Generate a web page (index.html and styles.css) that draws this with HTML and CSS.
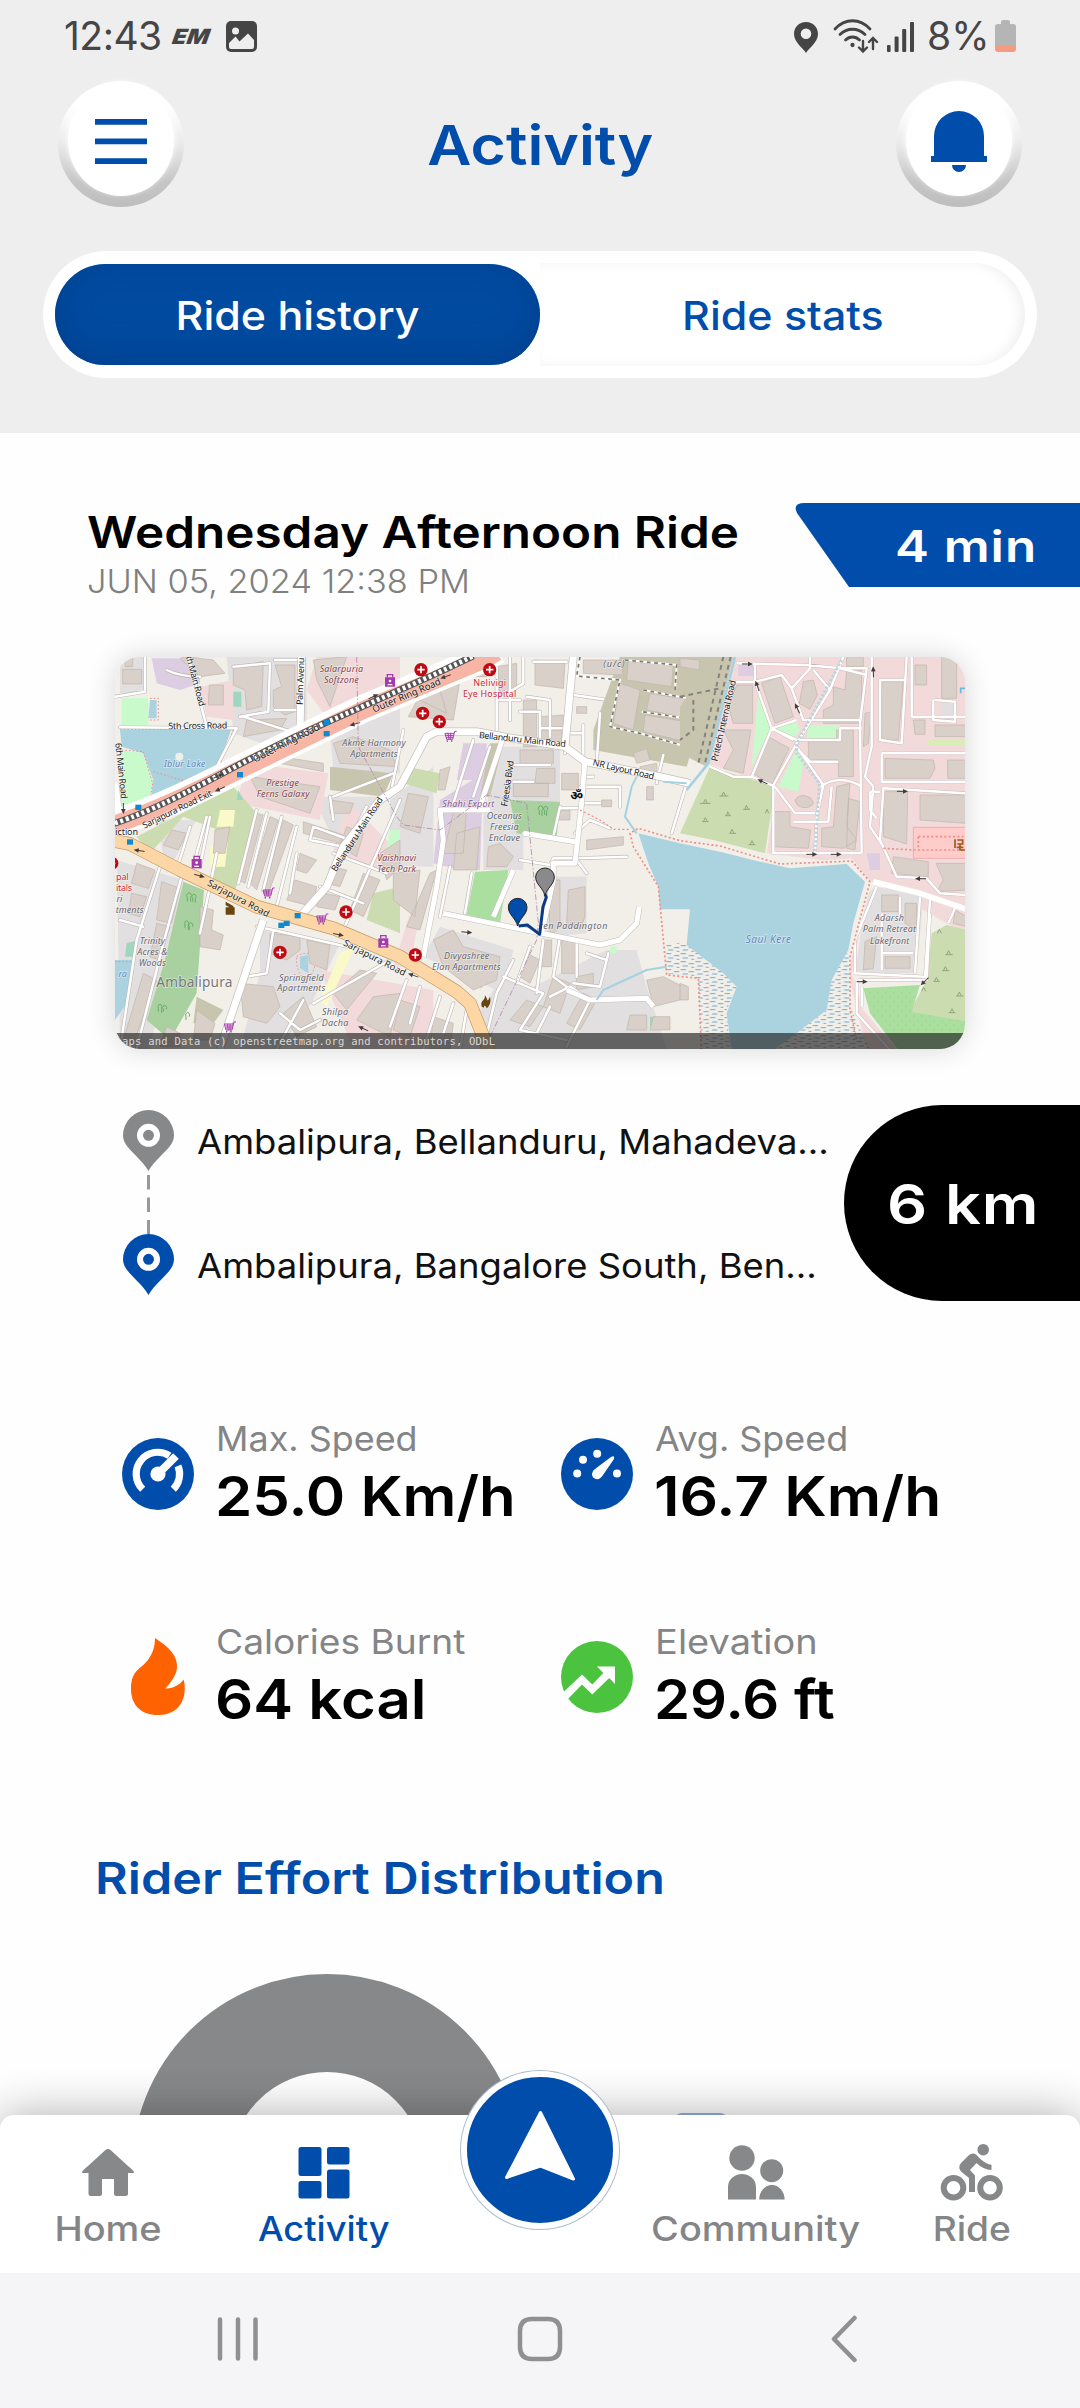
FILE: index.html
```html
<!DOCTYPE html>
<html lang="en">
<head>
<meta charset="utf-8">
<title>Activity</title>
<link rel="stylesheet" href="styles.css">
</head>
<body>
<div class="screen">
  <header class="top">
    <div class="status">
      <span class="clock">12:43</span>
      <span class="em">EM</span>
      <svg class="pic" width="31" height="31" viewBox="0 0 31 31"><rect width="31" height="31" rx="5" fill="#454545"/><path d="M3 22L9.500 15.500L13.500 20.500L22 12.500L28 19V26a2 2 0 0 1-2 2H5a2 2 0 0 1-2-2Z" fill="#eee"/><circle cx="9.500" cy="10" r="3.500" fill="#eee"/></svg>
      <span class="grow"></span>
      <svg class="loc" width="24" height="31" viewBox="0 0 24 31"><path fill="#454545" fill-rule="evenodd" d="M12 0C5 0 0 5 0 12C0 20 9 26 12 31C15 26 24 20 24 12C24 5 19 0 12 0ZM12 6.500a5.300 5.300 0 1 1 0 10.600a5.300 5.300 0 0 1 0-10.600Z"/></svg>
      <svg class="wifi" width="46" height="34" viewBox="0 0 46 34" fill="none" stroke="#454545" stroke-width="2.800" stroke-linecap="round"><path d="M2 10C12 -1 27 -1 37 10M7 15.500C14 8.500 25 8.500 32 15.500M12.500 21C16.500 17 22.500 17 26.500 21"/><circle cx="19.500" cy="26" r="1.400" fill="#454545" stroke-width="1.500"/><path stroke-width="2.400" d="M30 22V32M26 28.500L30 32.500L34 28.500M40 30V19.500M36 23L40 19L44 23"/></svg>
      <svg class="signal" width="28" height="30" viewBox="0 0 28 30" fill="#454545"><rect y="23" width="3.600" height="7" rx="1"/><rect x="7.600" y="14.500" width="4" height="15.500" rx="1"/><rect x="15.200" y="7" width="4" height="23" rx="1"/><rect x="23" width="4" height="30" rx="1"/></svg>
      <span class="percent">8%</span>
      <svg class="battery" width="21" height="32" viewBox="0 0 21 32"><path d="M6 4V2q0-2 2-2h5q2 0 2 2v2h3q3 0 3 3v19H0V7q0-3 3-3Z" fill="#b5b5b5"/><path d="M0 26H21V29q0 3-3 3H3q-3 0-3-3Z" fill="#f39c82"/></svg>
    </div>
    <div class="bar">
      <div class="round"><div class="cap"><svg width="52" height="46" viewBox="0 0 52 46" fill="#004dab"><path d="M0 0H52V5.700H0ZM0 19.500H52V25.200H0ZM0 39.300H52V45H0Z"/></svg></div></div>
      <h1>Activity</h1>
      <div class="round"><div class="cap"><svg class="bell" width="56" height="62" viewBox="0 0 56 62" fill="#004dab"><path d="M3 45V25A25 25 0 0 1 53 25V45H56V51H0V45ZM21 54H35A7 7 0 0 1 21 54Z"/></svg></div></div>
    </div>
    <div class="tabs">
      <div class="tab on"><span>Ride history</span></div>
      <div class="tab"><span>Ride stats</span></div>
    </div>
  </header>

  <main>
    <section class="head">
      <div class="names">
        <h2>Wednesday Afternoon Ride</h2>
        <p>JUN 05, 2024 12:38 PM</p>
      </div>
      <div class="badge">
        <svg width="285" height="84" viewBox="0 0 285 84"><path fill="#004dab" d="M10 0H285V84H54L2 10Q-3 0 10 0Z"/></svg>
        <span>4 min</span>
      </div>
    </section>

    <div class="map">
      <svg width="850" height="392" viewBox="0 0 850 392">
        <defs>
          <pattern id="marsh" width="44" height="24" patternUnits="userSpaceOnUse"><path d="M2 5H18M26 11H42M8 18H24M34 22H42" stroke="#3d93cf" stroke-width="2.200"/></pattern>
          <pattern id="dots" width="24" height="28" patternUnits="userSpaceOnUse"><circle cx="6" cy="8" r="1.600" fill="#84c482"/><circle cx="18" cy="22" r="1.600" fill="#84c482"/></pattern>
          <g id="hosp"><circle r="20" fill="#bf0a14"/><path d="M-11 0H11M0-11V11" stroke="#fff" stroke-width="5"/></g>
          <g id="shop"><path d="M-15-10H15V18H-15Z" fill="#a53aad"/><path d="M-8-10V-18H8V-10" fill="none" stroke="#a53aad" stroke-width="4"/><circle cy="1" r="4" fill="#fff"/><path d="M-7 12H7" stroke="#fff" stroke-width="4"/></g>
          <g id="cart" fill="none" stroke="#a53aad" stroke-width="3"><path d="M18-16H12L6 8H-12L-17-10H10M-14-4H9M-13 2H8M-8-10L-5 8M0-10V8"/><path d="M-12 13H9" stroke-dasharray="4 9" stroke-width="5"/></g>
          <g id="stop"><rect x="-9" y="-8" width="18" height="16" fill="#0d8ad0"/></g>
          <g id="arr"><path d="M-16 0H6" stroke="#443c38" stroke-width="3"/><path d="M2-7L17 0L2 7Z" fill="#443c38"/></g>
          <g id="pin"><path d="M0 0C-6-24-28-34-28-56A28 27 0 0 1 28-56C28-34 6-24 0 0Z" stroke="#222" stroke-width="3"/></g>
          <path id="lanes" fill="none" stroke-linejoin="round" stroke-linecap="round" d="M45 170L135 155V50M265 50L320 260M200 90Q240 110 300 110M400 80L510 70L505 215L420 230M430 230L590 280M525 60H600V210H525M610 50L590 290M60 262L410 265L350 380M470 510L415 730M500 520L445 740M545 530L490 750M590 560L530 800M320 530L285 660M330 530L300 680M640 560L750 600L800 500M640 560L630 600L730 620M590 640L570 760M660 740L790 790M700 640L860 700M900 480L730 870M180 680L110 900L60 1227M250 690L190 910L110 1227M270 560L230 690M350 640L330 740L300 880M60 840L130 860M470 860L520 870L500 1000L440 1010M520 870L740 920M610 1080L530 1227M640 1090L870 960M540 1120L600 1170L660 1140M700 470L880 400M690 470L700 540M1190 50V270M1230 50V240M1190 180H1260M1270 50V130L1190 180M1300 65H1400M1420 165L1510 178M1280 170L1350 180V290M1260 215H1320V310M1320 265H1390M1240 375H1350M1240 425H1300M1450 255V370M1395 340V280H1450M1500 220L1490 370M1460 410H1480M1440 440H1560V500M1450 490H1500M1380 505H1440M1425 580L1470 540L1530 565M1270 580L1425 605M1380 500L1360 590M1260 660L1350 675L1360 655H1430L1580 650M1430 660L1460 700M1690 345L1670 430M1760 430L1715 580M1120 300L1060 490M1170 320L1120 470M870 470L910 270M1050 680L1020 830M1115 700L1095 820M920 1020L870 1160M960 1040L930 1150M1020 1070L970 1227M1060 1090L1030 1180M1100 1110L1080 1227M1240 960L1190 1060L1150 1227M1290 920L1250 1030M1330 900L1310 1060M1380 890L1360 1010L1400 1040M1430 900V1010M1525 940L1500 1040L1420 1030M1460 940L1520 960M1210 1010L1330 1060L1260 1170L1400 1200M1350 1070L1410 1040L1470 1080L1400 1220M1350 1100L1310 1180"/>
          <path id="ways" fill="none" stroke-linejoin="round" d="M170 70L380 75L480 85H560L540 250L545 640M390 50V85L335 145L370 240H545M335 145L305 105L225 125H165M225 70V125L275 265L215 410M275 265L350 300L480 300V265H545M275 265L350 240M490 50L450 150L350 310L280 435V640H545M350 320L430 435L410 530L405 645M285 440L345 520H405M420 440Q480 400 545 440M455 440L445 545H340M275 265L340 300M90 380L160 410H215L285 440M400 90L450 150M480 85L560 105M575 50V320L555 410L580 440L570 560L610 620M680 50L665 310L600 300L600 120H680M695 50V230H860M765 180L825 185V245L760 240V180M605 340H860M605 340V425H860M860 460L610 445L600 600L650 710L740 715L780 760L860 765M355 330L390 365H475M750 780L735 1010L520 1000M590 740L525 900V1000M605 820V990M660 770V830H610M720 770L705 1000M605 940H700M535 1020H740L750 820M530 1020V1120L630 1230M545 1040V1100M825 805L805 850M570 455H600M570 455V510L590 535"/>
        </defs>
        <rect width="850" height="392" fill="#f2efe9"/>
        <g transform="translate(-15 -17) scale(.33333)">
          <!-- land use -->
          <g>
            <path fill="#e2dfe0" d="M380 50H620V280L540 330L400 280ZM60 50H140V160H60ZM690 280L900 200V400L700 390ZM640 470H840L700 600ZM480 870L720 910L640 1080L540 1227H420L480 1000ZM170 540H290L200 700ZM50 660L250 720L150 1227H60ZM1000 380V680H870V480ZM1190 320H1380V500H1160ZM1150 500H1270V690H1150ZM1020 860L1240 930L1210 1060L970 950ZM1340 710H1460V880L1340 890ZM1520 930H1610L1640 1040L1700 1227H1160L1300 1040ZM1210 1000L1330 1060L1200 1227L1130 1130Z"/>
            <path fill="#ddcde3" d="M155 55H300V130L240 150L170 130ZM1090 310H1160V420H1070ZM1020 480L1150 400L1140 690H1080L1000 670Z"/>
            <path fill="#f3dada" d="M300 140L400 120V240L320 230ZM440 370L685 400L660 540L410 490ZM650 50H900V190L700 260L620 150ZM740 480L900 640L860 700L700 640ZM660 990L1000 1050V1227H760ZM930 820L960 820L930 980H880Z"/>
            <path fill="#c8c5ae" d="M690 380L880 400L850 470L690 450ZM1170 310H1210L1170 470H1140ZM1480 270L1560 50H1860L1760 380L1480 330ZM290 1070L370 1110L340 1150H280Z"/>
            <path fill="#cbdcb0" d="M110 590L400 440L470 520L400 770L330 740L380 580L250 530L150 640ZM920 380L1020 400L1010 460L910 430ZM820 760L900 740V880L800 840Z"/>
            <path fill="#fafac8" d="M360 510H405L400 560H350ZM330 620L385 590L375 680H330ZM720 940L765 920L680 1100L660 1080Z"/>
            <path fill="#c8facc" d="M65 175H145V255H65ZM62 330L130 340L160 430L140 500L70 520ZM870 570H900V630H860ZM1530 920H1550V940H1530Z"/>
            <path fill="#a9d1a0" d="M250 725L312 750L290 1060L210 1200L140 1140L195 960ZM1230 480L1380 485L1370 590L1250 580Z"/>
            <path fill="#aadfa0" d="M1125 695L1225 690L1200 850L1100 825Z"/>
            <path fill="#9fd6be" d="M400 155H424V200H400ZM415 450L430 480H410ZM80 910L115 900L100 950H75ZM1650 1130H1670V1160H1650Z"/>
          </g>
          <!-- lakes -->
          <path fill="#aad3df" d="M60 270L395 265L350 390L180 480L150 500L160 420L130 340L65 320ZM150 180H170V235H145ZM45 960H100L80 1090L45 1140ZM600 950L625 945V1000L600 985ZM320 880H335V905H315Z"/>
          <circle cx="238" cy="350" r="12" fill="#f2efe9"/>
          <path fill="none" stroke="#ee8d86" stroke-width="3" stroke-dasharray="5 6" d="M60 268H400L355 390M150 175H175V240H145M65 330L130 335L158 430L145 510M160 395L260 425M590 950Q620 930 645 950Q650 1000 615 1020Q585 990 590 950M45 965H100M1065 910L1120 940L1160 1010L1140 1050"/>
          <!-- buildings -->
          <g fill="#d9d0c9" stroke="#c0b3a9" stroke-width="2">
            <path d="M68 88H125V132H68ZM75 55H98V80H75ZM240 55L260 50L340 60L375 100L300 110ZM328 135H370V195H325ZM400 80L490 65L485 200L440 210L435 150L400 135ZM525 75H585V215L555 225L520 200V150L545 140ZM440 240L560 235L540 270L430 290ZM640 60L740 50L690 200L650 120ZM700 310L760 290L870 330L890 380L720 370ZM450 410L660 440L630 520L480 470ZM540 350L670 370V395L540 370ZM690 480L760 490L750 520H690ZM215 570L260 580L235 630L190 615ZM345 570L390 560L375 640H340ZM470 520L490 525L435 730L415 720ZM510 530L535 540L470 750L450 730ZM550 540L580 555L505 760H490ZM610 545L730 585L720 610L610 580ZM600 640L650 660L620 700L590 690ZM585 720L650 740L640 800L560 780ZM655 755L720 770L705 810L650 800ZM690 680L740 690L720 740L680 730ZM110 670L165 690L145 745L95 730ZM185 725L240 745L215 850L170 840ZM170 850L210 860L180 960L150 950ZM95 760L140 770L120 830L85 820ZM300 800L340 810L335 870L370 885L360 930L300 920ZM510 880L600 890V930L560 960L510 940ZM620 900L690 915L680 990L630 970ZM420 1030L520 1040L540 1100L500 1150L430 1130ZM550 1120L610 1070L650 1160L590 1190ZM700 1060L780 990L830 1000L740 1110ZM820 1070L900 1060L870 1190L770 1140ZM130 1000L170 1020L100 1210L70 1200ZM200 1160L240 1180V1220H180ZM290 1110L345 1150L330 1200H280ZM740 560L790 580L770 650L720 620ZM840 640L900 600V680L860 720ZM790 700L840 720L790 830L750 810Z"/>
            <path d="M925 230L990 110L1080 120L1060 240ZM960 180L1020 150L1040 220ZM1100 60H1160V110H1100ZM1190 80L1250 70V150L1200 160ZM1270 180H1310V320H1270ZM1320 230L1390 225V260L1320 265ZM1325 270H1385V305H1320ZM1305 60L1395 70L1390 145L1305 135ZM1260 330H1360V370H1260ZM1310 385H1365V430H1305ZM1240 430H1345V470H1240ZM1385 400H1435V450H1385ZM925 460L985 470L960 580L900 560ZM1020 390L1050 380L1035 450H1015ZM1060 520L1100 500L1090 640H1030ZM1070 580L1140 560L1130 690H1060ZM1165 620L1200 610L1240 650L1220 680H1160ZM880 700L960 690L945 830L880 780ZM990 700L1010 690L960 870L920 860ZM1000 900L1060 870L1090 920L1200 950L1190 1020L1120 1050L1030 980ZM1345 720H1380V860L1350 890ZM1405 750L1455 740V830L1440 870L1400 850ZM1460 600L1570 590V615L1460 630ZM1280 940L1320 960L1290 1030L1260 1010ZM1330 900H1355V980H1325ZM1385 900H1430V1000H1385ZM1430 1010L1480 1000V1040L1430 1050ZM1360 1010L1410 1030L1380 1120L1330 1100ZM1450 1060L1490 1080L1440 1170L1400 1150ZM1280 1080L1330 1100L1290 1160L1230 1140ZM1640 1020L1690 1010L1750 1040L1740 1080L1660 1100ZM1590 1125H1640V1170H1580ZM1660 1130H1710V1170H1650ZM1430 200H1460V220H1430ZM1600 340L1640 325L1650 360L1610 370ZM1620 380L1670 370V400H1620ZM1640 440H1660V480H1640ZM1505 480H1535V500H1505ZM1375 510H1410V540H1375ZM900 1080L960 1100L930 1190L880 1170ZM1000 1130L1060 1150L1050 1227H990Z"/>
            <path d="M1450 60H1560L1570 105L1450 100ZM1585 65L1720 75L1715 140L1580 120ZM1560 130L1620 150L1600 270L1540 250ZM1650 160L1770 180L1765 235L1640 210ZM1635 225L1760 245L1755 305L1630 275Z"/>
          </g>
          <path fill="none" stroke="#fff" stroke-width="6" d="M1440 50L1430 108L1560 120L1530 260L1620 280L1760 320M1575 60L1730 75L1725 150M1630 150L1790 180V240L1625 215"/>
          <path fill="none" stroke="#7d7774" stroke-width="5" stroke-dasharray="11 11" d="M1440 50L1430 108L1560 120L1530 260L1620 280L1760 320M1575 60L1730 75L1725 150M1630 150L1790 180V240L1625 215"/>
          <!-- minor streets -->
          <use href="#lanes" stroke="#bdb7b5" stroke-width="11"/>
          <use href="#lanes" stroke="#fff" stroke-width="7.500"/>
          <!-- collector roads -->
          <g fill="none" stroke-linejoin="round">
            <path stroke="#c3bdba" stroke-width="25" d="M600 830L680 740L730 620L840 480L900 440L980 290L1010 275H1130L1210 290L1395 320L1455 365L1680 410L1770 430M1395 320L1420 50M490 840L360 1227M600 280L605 50M45 430L60 560"/>
            <path stroke="#c3bdba" stroke-width="18" d="M1030 820L1250 865L1500 915L1560 900L1610 850L1618 800M1455 360L1445 490L1425 670H1360V720L1325 880M1170 510H1020L1030 600L1010 740L970 950M1210 290L1140 500M1270 580L1425 605M1240 690L1180 830M1400 1050L1470 1080L1640 1075L1660 1100"/>
            <path stroke="#fff" stroke-width="21" d="M600 830L680 740L730 620L840 480L900 440L980 290L1010 275H1130L1210 290L1395 320L1455 365L1680 410L1770 430M1395 320L1420 50M490 840L360 1227M600 280L605 50M45 430L60 560"/>
            <path stroke="#fff" stroke-width="15" d="M1030 820L1250 865L1500 915L1560 900L1610 850L1618 800M1455 360L1445 490L1425 670H1360V720L1325 880M1170 510H1020L1030 600L1010 740L970 950M1210 290L1140 500M1270 580L1425 605M1240 690L1180 830M1400 1050L1470 1080L1640 1075L1660 1100"/>
            <!-- trunk road with railway -->
            <path stroke="#fff" stroke-width="84" d="M30 552Q140 526 350 421T790 206L1150 56L1190 31"/>
            <path stroke="#f7b5a5" stroke-width="54" d="M30 557Q140 526 350 423T790 210L1150 60L1190 36"/>
            <path stroke="#555" stroke-width="20" d="M30 554Q140 522 345 412T780 203L1000 105L1120 48"/>
            <path stroke="#fff" stroke-width="14" stroke-dasharray="9 8" d="M30 554Q140 522 345 412T780 203L1000 105L1120 48"/>
            <!-- Sarjapura Road -->
            <path stroke="#c49a68" stroke-width="41" d="M30 600L90 612L240 690L470 800L700 865L900 950L1070 1055L1110 1090L1170 1240"/>
            <path stroke="#fcd6a4" stroke-width="37" d="M30 600L90 612L240 690L470 800L700 865L900 950L1070 1055L1110 1090L1170 1240"/>
            <path stroke="#ac84aa" stroke-width="3" stroke-dasharray="18 6 4 6" opacity=".8" d="M770 50L775 320L890 530L910 555L1020 570L1160 465L1280 490L1315 850L1310 900L1170 1190"/>
            <path stroke="#a5d2e3" stroke-width="6" d="M1610 410L1595 440L1575 530L1610 580M1700 980L1640 990L1510 1050L1490 1080M1690 425L1760 430"/>
            <path stroke="#ee8d86" stroke-width="3.500" stroke-dasharray="6 7" d="M1440 510L1500 540L1540 568H1590"/>
          </g>
        </g>
        <g transform="translate(565 -17) scale(.33333)">
          <!-- business district -->
          <path fill="#f3dada" d="M165 50H860V880L800 850L570 720L515 1000L550 1110L650 1230H560L510 1020L500 670L260 640L290 440L80 370Z"/>
          <path fill="#c8c5ae" d="M100 50H160L80 380L0 340V200Z"/>
          <path fill="#cbdcb0" d="M90 380L285 440L255 640L100 600L0 580Z"/>
          <path fill="#c8facc" d="M235 160L275 260L215 380ZM275 265L345 240L360 270L335 300ZM385 255H480L470 300H380ZM350 330L370 370L355 455L295 440Z"/>
          <path fill="#ddcde3" d="M175 75H225V108H175ZM560 640H600V690H570Z"/>
          <path fill="#e2dfe0" d="M560 760L590 740L730 770L710 1000L525 1000ZM785 190H825V240H785Z"/>
          <path fill="#cbdcb0" d="M755 880L800 855L860 870V1150L690 1115L740 1020Z"/>
          <path fill="#aadfa0" d="M550 1045L720 1035L695 1115L860 1145V1230H655L570 1120Z"/>
          <path fill="url(#dots)" d="M550 1045L720 1035L695 1115L860 1145V1230H655L570 1120Z"/>
          <path fill="#fcc" stroke="#e99" stroke-width="2" d="M700 562H860V655H700Z"/>
          <path fill="#d8edb8" d="M745 300H860V318H745Z"/>
          <g fill="#d9d0c9" stroke="#c0b3a9" stroke-width="2">
            <path d="M170 135H218V250H160L145 200ZM130 270H213L190 400L130 385L160 330ZM245 130L300 110L340 230L285 250ZM265 290L328 325L275 435L220 400ZM370 125L400 120L412 165L390 208L358 190ZM460 140L495 150L500 90H545V250H430V210L460 195ZM500 50H550V80H500ZM385 305H470V270H520V410H475V360H385ZM605 125H670L655 300H605ZM555 220L575 215L565 310L550 320ZM705 75H740V135H705ZM700 240H735V283H705ZM785 50H830V175H785ZM765 255H860V290H765ZM615 355L760 360L765 385L750 415H615ZM803 360H860V415H803ZM610 455H683L680 612L610 590ZM720 465H860V550L720 540ZM280 515H330V560L392 570L385 625L280 620ZM470 440L510 430L500 560L530 600L490 625L425 620V565L460 560ZM505 475L540 485L525 630L500 625ZM640 650L745 665V710L635 700ZM768 670H860V750L770 755L790 720ZM605 765H655V815H605ZM675 790H710V870L675 850ZM555 905L590 890L580 985L550 990ZM615 950H690V985H615ZM825 810L860 830V860L820 850ZM0 1030L25 1040V1080H0ZM0 55L58 60V90L0 80ZM345 480A30 28 0 0 0 400 490A30 28 0 0 0 345 480"/>
          </g>
          <use href="#ways" stroke="#c9b6b5" stroke-width="10"/>
          <use href="#ways" stroke="#fff" stroke-width="7.500"/>
          <g fill="none" stroke-linejoin="round">
            <path stroke="#fff" stroke-width="17" d="M580 725L720 760L860 808"/>
            <path stroke="#85817c" stroke-width="6" stroke-dasharray="14 12" d="M130 50L55 370M152 50L75 370M0 170L120 145M40 180V270L0 300"/>
            <path stroke="#a5d2e3" stroke-width="8" d="M165 50L85 370L20 450"/>
            <path stroke="#b7d6df" stroke-width="9" stroke-dasharray="7 6" d="M485 60L350 310V340L418 430L405 640"/>
          </g>
          <!-- Saul Kere -->
          <path fill="#f2efe9" d="M-60 808H32L20 915L60 1230H150L460 1230L515 950L575 730L515 655L330 670L120 625L0 600L-130 565Z"/>
          <path fill="url(#marsh)" d="M-40 910H20L140 1000L170 1040L140 1110L150 1230H65L55 1015L-45 1000ZM505 930L455 1020L440 1110L350 1180L250 1230H570L515 1110Z"/>
          <path fill="#aad3df" d="M-125 580L0 610L120 635L240 665L330 685L500 672L555 725L520 850L505 930L455 1020L440 1110L350 1180L280 1230H155L140 1120L170 1040L130 1000L20 915L30 808H-60L-65 740L-95 670Z"/>
          <path fill="none" stroke="#ee8d86" stroke-width="5" stroke-dasharray="6 7" d="M64 1230L55 1015L-40 1005L-65 740L-140 620L-150 580L-125 565L0 602L120 618L300 672L515 663L570 725L510 950V1110L530 1200M610 625L700 630H860M715 590H850M715 590V625"/>
          <g fill="none" stroke="#8fa77a" stroke-width="3"><path d="M70 490L76 478L82 490M60 490H92M125 468L131 456L137 468M118 468H145M195 508L199 496L205 508M190 508H210M140 527L143 515L150 527M135 527H152M70 545L76 533L82 545M66 545H86M150 580L156 568L162 580M148 580H168M210 614L216 602L222 614M206 614H226M256 520L261 508L266 520M800 944L806 932L812 944M796 944H818M790 992L796 980L802 992M786 992H808M764 1024L769 1012L775 1024M760 1024H780M832 1068L838 1056L844 1068M828 1068H850M725 1054L731 1042L737 1054M810 1118L816 1106L822 1118M806 1118H826M772 880L778 868L784 880"/></g>
          <path fill="none" stroke="#9c5b16" stroke-width="5" d="M825 598V624M832 600H848V612H832M840 612V630H856M830 622H850"/>
          <path fill="none" stroke="#6bb8e0" stroke-width="5" d="M860 145H842V160"/>
        </g>
        <!-- direction arrows and places -->
        <g transform="translate(-15 -17) scale(.33333)">
          <use href="#arr" transform="translate(298 707) rotate(15)"/><use href="#arr" transform="translate(715 884) rotate(12)"/><use href="#arr" transform="translate(118 632) rotate(190)"/><use href="#arr" transform="translate(360 447) rotate(155)"/><use href="#arr" transform="translate(70 505) rotate(90)"/><use href="#arr" transform="translate(765 252) rotate(165)"/><use href="#arr" transform="translate(355 408) rotate(-25)"/><use href="#arr" transform="translate(820 170) rotate(-25)"/><use href="#arr" transform="translate(940 1006) rotate(200)"/><use href="#arr" transform="translate(790 1166) rotate(205)"/><use href="#arr" transform="translate(1100 877) rotate(5)"/><use href="#arr" transform="translate(1037 110) rotate(160)"/>
          <use href="#arr" transform="translate(1942 72)"/><use href="#arr" transform="translate(1972 138) rotate(-110)"/><use href="#arr" transform="translate(2092 205) rotate(-115)"/><use href="#arr" transform="translate(2320 96) rotate(-92)"/><use href="#arr" transform="translate(1988 425) rotate(205)"/><use href="#arr" transform="translate(2407 454)"/><use href="#arr" transform="translate(2135 643)"/><use href="#arr" transform="translate(2208 643)"/><use href="#arr" transform="translate(2462 716) rotate(180)"/><use href="#arr" transform="translate(2286 1025)"/><use href="#arr" transform="translate(2474 1024) rotate(135)"/>
          <use href="#stop" x="680" y="247"/><use href="#stop" x="680" y="281"/><use href="#stop" x="420" y="404"/><use href="#stop" x="115" y="502"/><use href="#stop" x="90" y="606"/><use href="#stop" x="593" y="827"/><use href="#stop" x="560" y="850"/><use href="#stop" x="544" y="856"/>
          <use href="#hosp" x="738" y="816"/><use href="#hosp" x="540" y="937"/><use href="#hosp" x="35" y="670"/><use href="#hosp" x="963" y="89"/><use href="#hosp" x="1169" y="89"/><use href="#hosp" x="968" y="220"/><use href="#hosp" x="1018" y="245"/><use href="#hosp" x="946" y="945"/>
          <use href="#shop" x="870" y="122"/><use href="#shop" x="290" y="667"/><use href="#shop" x="850" y="905"/>
          <use href="#cart" x="506" y="760"/><use href="#cart" x="667" y="838"/><use href="#cart" x="390" y="1162"/><use href="#cart" x="1052" y="290"/>
          <path fill="#69450f" d="M377 785L400 798V808L377 796ZM377 802H404V824H377ZM1145 1100C1140 1080 1155 1085 1155 1066C1165 1080 1160 1090 1170 1070C1175 1090 1165 1100 1160 1105C1158 1095 1150 1095 1152 1103Z"/>
          <path fill="none" stroke="#67ad69" stroke-width="3" d="M262 785V772A7 8 0 1 1 272 772V785M278 785V775A6 7 0 1 1 286 775V788M255 865V855A6 8 0 1 1 265 855V870M268 870V860A6 7 0 1 1 277 860M175 1115V1105A6 8 0 1 1 185 1105V1118M190 1115V1108A6 7 0 1 1 198 1108M258 1140V1130A6 8 0 1 1 268 1130M1318 525V512A7 8 0 1 1 1326 512V528M1334 525V512A6 7 0 1 1 1340 512V528"/>
          <g class="lbl">
            <g class="street">
              <text x="205" y="268" textLength="177" transform="rotate(-1 205 268)">5th Cross Road</text>
              <text textLength="156" transform="translate(258 50) rotate(75)">th Main Road</text>
              <text textLength="168" transform="translate(46 310) rotate(84)">6th Main Road</text>
              <text textLength="142" transform="translate(608 195) rotate(-88)">Palm Avenu</text>
              <text textLength="220" font-size="29" transform="translate(465 368) rotate(-27)">Outer Ring Road</text>
              <text textLength="220" font-size="29" transform="translate(822 218) rotate(-23)">Outer Ring Road</text>
              <text textLength="228" transform="translate(133 566) rotate(-26)">Sarjapura Road Exit</text>
              <text textLength="206" font-size="28" transform="translate(320 735) rotate(28)">Sarjapura Road</text>
              <text textLength="206" font-size="28" transform="translate(728 915) rotate(27)">Sarjapura Road</text>
              <text textLength="260" transform="translate(708 697) rotate(-57)">Bellanduru Main Road</text>
              <text textLength="262" transform="translate(1136 294) rotate(6)">Bellanduru Main Road</text>
              <text textLength="188" transform="translate(1477 376) rotate(13)">NR Layout Road</text>
              <text textLength="138" transform="translate(1222 500) rotate(-82)">Freesia Blvd</text>
              <text textLength="248" transform="translate(1852 365) rotate(-77)">Pritech Internal Road</text>
              <text x="46" y="586" textLength="68">iction</text>
            </g>
            <g class="shopping">
              <text x="724" y="95" textLength="130">Salarpuria</text><text x="724" y="129" textLength="104">Softzone</text>
              <text x="548" y="438" textLength="98">Prestige</text><text x="549" y="471" textLength="158">Ferns Galaxy</text>
              <text x="890" y="663" textLength="116">Vaishnavi</text><text x="890" y="695" textLength="116">Tech Park</text>
            </g>
            <g class="housing">
              <text x="822" y="318" textLength="190">Akme Harmony</text><text x="822" y="350" textLength="142">Apartments</text>
              <text x="58" y="786">ri</text><text x="89" y="820" textLength="84">tments</text>
              <text x="157" y="912" textLength="76">Trinity</text><text x="157" y="944" textLength="90">Acres &amp;</text><text x="157" y="978" textLength="82">Woods</text>
              <text x="604" y="1022" textLength="134">Springfield</text><text x="604" y="1054" textLength="144">Apartments</text>
              <text x="705" y="1126" textLength="78">Shilpa</text><text x="705" y="1158" textLength="80">Dacha</text>
              <text x="1213" y="536" textLength="106">Oceanus</text><text x="1213" y="570" textLength="86">Freesia</text><text x="1213" y="602" textLength="94">Enclave</text>
              <text x="1100" y="956" textLength="136">Divyashree</text><text x="1099" y="990" textLength="206">Elan Apartments</text>
              <text x="1420" y="867" textLength="204">ren Paddington</text>
              <text x="1542" y="82" textLength="64">(u/c)</text>
              <text x="2368" y="844" textLength="88">Adarsh</text><text x="2368" y="877" textLength="160">Palm Retreat</text><text x="2369" y="911" textLength="118">Lakefront</text>
            </g>
            <text class="works" x="1105" y="500" textLength="156">Shahi Export</text>
            <text class="water" x="254" y="381" textLength="124">Iblur Lake</text>
            <text class="water" x="2005" y="909" textLength="136" font-size="30">Saul Kere</text>
            <text class="water" x="68" y="1010">ra</text>
            <g class="clinic"><text x="67" y="720" textLength="38">pal</text><text x="72" y="754" textLength="48">itals</text><text x="1169" y="138" textLength="98">Nelivigi</text><text x="1169" y="170" textLength="160">Eye Hospital</text></g>
            <text class="town" x="283" y="1041" textLength="228">Ambalipura</text>
            <text x="1430" y="479" text-anchor="middle" font-size="38" font-weight="700" fill="#111">ॐ</text>
          </g>
          <!-- recorded ride -->
          <path fill="none" stroke="#0b3b84" stroke-width="9" stroke-linejoin="round" d="M1335 762L1339 772L1329 800L1319 883L1282 855L1256 858"/>
          <use href="#pin" x="1335" y="767" fill="#8a8a8c"/>
          <use href="#pin" x="1253" y="858" fill="#004dab"/>
        </g>
        <rect y="376" width="850" height="16" fill="#222" fill-opacity=".66"/>
        <text class="credit" x="7" y="388" textLength="373">aps and Data (c) openstreetmap.org and contributors, ODbL</text>
      </svg>
    </div>

    <section class="route">
      <div class="stops">
        <div class="stopline"><svg width="51" height="61" viewBox="0 0 51 61"><path fill="#878889" d="M25.500 0A25.500 25.500 0 0 0 0 25.500C0 38 17 46 25.500 61C34 46 51 38 51 25.500A25.500 25.500 0 0 0 25.500 0Z"/><circle cx="25.500" cy="25.300" r="8.500" fill="none" stroke="#fff" stroke-width="6"/></svg><span>Ambalipura, Bellanduru, Mahadeva...</span></div>
        <svg class="dash" width="3" height="63" viewBox="0 0 3 63"><path d="M1.500 4V63" stroke="#999" stroke-width="3" stroke-dasharray="14.500 8"/></svg>
        <div class="stopline"><svg width="51" height="61" viewBox="0 0 51 61"><path fill="#004dab" d="M25.500 0A25.500 25.500 0 0 0 0 25.500C0 38 17 46 25.500 61C34 46 51 38 51 25.500A25.500 25.500 0 0 0 25.500 0Z"/><circle cx="25.500" cy="25.300" r="8.500" fill="none" stroke="#fff" stroke-width="6"/></svg><span>Ambalipura, Bangalore South, Ben...</span></div>
      </div>
      <div class="distance"><span>6 km</span></div>
    </section>

    <section class="stats">
      <div class="stat">
        <svg width="72" height="72" viewBox="0 0 72 72"><circle cx="36" cy="36" r="36" fill="#004dab"/><g fill="none" stroke="#fff" stroke-width="7.200"><path d="M20.700 51.300A21.600 21.600 0 0 1 47.500 17.700M56 27.800A21.600 21.600 0 0 1 51.300 51.300"/><path d="M36 36L54 18" stroke-width="8"/></g><circle cx="36" cy="36" r="7.600" fill="#fff"/></svg>
        <div><p class="k">Max. Speed</p><p class="v">25.0 Km/h</p></div>
      </div>
      <div class="stat">
        <svg width="72" height="72" viewBox="0 0 72 72"><circle cx="36" cy="36" r="36" fill="#004dab"/><g fill="#fff"><circle cx="16.200" cy="35.500" r="4"/><circle cx="22" cy="21.700" r="4"/><circle cx="36.200" cy="15.700" r="4"/><circle cx="56" cy="35.500" r="4"/><path d="M31 36Q31 33 34 31L50 19Q54 17 53 21L42 37Q39 42 35 41Q31 40 31 36Z"/></g></svg>
        <div><p class="k">Avg. Speed</p><p class="v avg">16.7 Km/h</p></div>
      </div>
      <div class="stat">
        <svg class="flame" width="72" height="78" viewBox="-9 0 72 78"><path fill="#ff6200" d="M24 0C38 9 47 18 46 30C45 38 40 44 34.500 50.500C42 51 50 46 52.500 41.500C56 52 54 77 27 77C10 77 0 67 0 51C0 32 10 31 17 22C22 15 24 8 24 0Z"/></svg>
        <div><p class="k cal">Calories Burnt</p><p class="v">64 kcal</p></div>
      </div>
      <div class="stat">
        <svg width="72" height="72" viewBox="0 0 72 72"><circle cx="36" cy="36" r="36" fill="#4bc33e"/><path fill="#fff" d="M0 53.500L21 33.500L31.300 43.500L42.400 32L36 25.500H54V43L48.200 37L31.300 53.500L21 43.500L4 61Z"/></svg>
        <div><p class="k elev">Elevation</p><p class="v feet">29.6 ft</p></div>
      </div>
    </section>

    <h3>Rider Effort Distribution</h3>
    <section class="chart">
      <svg width="390" height="390" viewBox="0 0 390 390"><circle cx="195" cy="195" r="146" fill="none" stroke="#878889" stroke-width="98"/></svg>
      <div class="swatch"></div>
    </section>
  </main>

  <nav class="nav">
    <div class="item"><svg width="64" height="64" viewBox="0 0 64 64"><path fill="#878889" d="M29.500 10Q32 8 34.500 10L57 30.500Q59 33 57 33H52V53.500Q52 56 49.500 56H40.500Q38 56 38 53.500V39H26V53.500Q26 56 23.500 56H15Q12.500 56 12.500 53.500V33H7Q5 33 7 30.500Z"/></svg><span class="wide">Home</span></div>
    <div class="item active"><svg width="64" height="64" viewBox="0 0 64 64" fill="#004dab"><rect x="6.500" y="7" width="23" height="29" rx="2.500"/><rect x="35" y="7" width="22.500" height="17.500" rx="2.500"/><rect x="6.500" y="41" width="23" height="17.500" rx="2.500"/><rect x="35" y="29.500" width="22.500" height="29" rx="2.500"/></svg><span class="act">Activity</span></div>
    <div class="item mid"><div class="fab"><svg width="72" height="72" viewBox="0 0 72 72"><path fill="#fff" stroke="#fff" stroke-width="3" stroke-linejoin="round" d="M36.500 3.500L69.500 70L36.500 57L2.500 68.500Z"/></svg></div></div>
    <div class="item"><svg width="64" height="64" viewBox="0 0 64 64" fill="#878889"><circle cx="18" cy="18" r="12.700"/><path d="M4 59.500V47A14 13 0 0 1 32 47V59.500ZM35.200 59.500A12.700 14.500 0 0 1 60.600 59.500Z"/><circle cx="47.700" cy="30.700" r="11.500"/></svg><span class="wide">Community</span></div>
    <div class="item"><svg width="64" height="64" viewBox="0 0 64 64" fill="#878889"><g fill="none" stroke="#878889" stroke-width="6"><circle cx="13.500" cy="47.700" r="9.800"/><circle cx="50" cy="47.700" r="9.800"/></g><circle cx="43.200" cy="9.700" r="5.800"/><path d="M19.300 27Q19.300 25 21 23L28.500 15.500Q32.500 12 36.500 15Q42 21 46 23Q49 24.500 51.500 24.800V30Q43 29.500 36.500 23L30 30L35 35.500V52H29V38L21 31.500Q19 29.500 19.300 27Z"/></svg><span>Ride</span></div>
  </nav>

  <footer class="sys">
    <svg width="42" height="46" viewBox="0 0 42 46"><path d="M3 3.500V42.500M21 3.500V42.500M38.500 3.500V42.500"/></svg>
    <svg width="46" height="46" viewBox="0 0 46 46"><path d="M15 3H31Q43 3 43 15V31Q43 43 31 43H15Q3 43 3 31V15Q3 3 15 3Z"/></svg>
    <svg width="42" height="48" viewBox="0 0 42 48"><path d="M25.500 3L5 24L25.500 45"/></svg>
  </footer>
</div>
</body>
</html>
```
FILE: styles.css
```css
* { box-sizing: border-box; }
body { margin: 0; background: #fff; }
h1, h2, h3, p { margin: 0; font-weight: 600; white-space: nowrap; }
svg { display: block; flex: none; }

.screen {
  width: 1080px;
  height: 2408px;
  display: flex;
  flex-direction: column;
  overflow: hidden;
  font-family: Inter, "Liberation Sans", sans-serif;
  background: #fefefe;
}

.top { flex: none; height: 433px; background: #eee; }
.status {
  display: flex;
  height: 72px;
  padding: 0 64px;
  font-size: 39px;
  line-height: 72px;
  color: #454545;
}
.clock { width: 109px; letter-spacing: -0.5px; }
.em { width: 53px; font-size: 21px; font-weight: 900; font-style: italic; line-height: 73px; transform: skewX(-10deg) scaleX(1.1); transform-origin: 0 50%; }
.pic { margin-top: 21px; }
.grow { flex: 1; }
.loc { margin: 22px 15px 0 0; }
.wifi { margin: 19px 8px 0 0; }
.signal { margin: 22px 12px 0 0; }
.percent { width: 68px; letter-spacing: 0; }
.battery { margin-top: 20px; }

.bar {
  display: flex;
  justify-content: space-between;
  padding: 9px 58px 0;
}
.bar h1 { font-size: 55px; line-height: 128px; height: 126px; color: #004dab; transform: scaleX(1.104); }
.round {
  width: 126px;
  height: 126px;
  border-radius: 50%;
  padding: 5px 10px 0;
  background: linear-gradient(#fff 0%, #fff 20%, #ececec 48%, #c6c6c6 80%, #bdbdbd 100%);
}
.cap {
  display: flex;
  align-items: center;
  justify-content: center;
  height: 110px;
  padding-top: 2px;
  border-radius: 50%;
  background: #fff;
  box-shadow: 0 -3px 7px #fff;
}
.bell { margin-top: -1px; }

.tabs {
  display: flex;
  height: 127px;
  margin: 44px 43px 0;
  padding: 12px;
  border-radius: 64px;
  background: #fff;
}
.tab {
  flex: 1;
  height: 103px;
  text-align: center;
  font-size: 40px;
  font-weight: 500;
  line-height: 106px;
  color: #004dab;
  border-radius: 0 52px 52px 0;
  box-shadow: inset -6px 0 14px -2px #eee;
}
.tab span { display: inline-block; transform: scaleX(1.074); }
.tab.on {
  flex: none;
  width: 485px;
  height: 101px;
  margin-top: 1px;
  line-height: 104px;
  color: #fff;
  border-radius: 51px;
  background: #004a9f;
  box-shadow: inset 0 -8px 30px #00418f;
}

main { flex: none; height: 1682px; }
.head { display: flex; justify-content: space-between; padding: 70px 0 0 87px; }
.head h2 { font-size: 44px; line-height: 58px; color: #000; transform: scaleX(1.123); transform-origin: 0 50%; }
.head p { font-size: 33px; font-weight: 300; line-height: 40px; color: #808080; transform: scaleX(1.041); transform-origin: 0 50%; }
.badge { position: relative; width: 285px; height: 84px; }
.badge span {
  position: absolute;
  top: 0;
  left: 100px;
  font-size: 44px;
  font-weight: 600;
  line-height: 86px;
  letter-spacing: .8px;
  color: #fff;
  white-space: nowrap;
  transform: scaleX(1.16);
  transform-origin: 0 50%;
}

.map {
  width: 850px;
  height: 392px;
  margin: 56px 0 0 115px;
  border-radius: 25px;
  overflow: hidden;
  box-shadow: 0 0 28px rgba(0, 0, 0, .16);
}
.lbl { font-family: "Noto Sans", sans-serif; font-size: 27px; }
.lbl text { paint-order: stroke; stroke: rgba(255, 255, 255, .5); stroke-width: 4px; }
.street { font-size: 27px; fill: #222; }
.housing, .shopping, .works, .water { font-style: italic; text-anchor: middle; }
.housing { fill: #66666e; }
.shopping { fill: #85444f; }
.works { fill: #7d5a8c; }
.water { fill: #6485bd; }
.clinic { fill: #cf2b38; text-anchor: middle; }
.town { font-size: 41px; fill: #77777b; text-anchor: middle; }
.credit { font: 10.5px "DejaVu Sans Mono", monospace; fill: #d8d8d8; }

.route { display: flex; justify-content: space-between; height: 196px; margin-top: 56px; }
.stops { padding: 5px 0 0 123px; }
.stopline {
  display: flex;
  width: 700px;
  height: 61px;
  font-size: 33.5px;
  line-height: 64px;
  color: #111;
  white-space: nowrap;
}
.stopline span { margin-left: 23px; transform: scaleX(1.088); transform-origin: 0 50%; }
.dash { margin-left: 24px; }
.distance {
  width: 236px;
  padding-left: 43px;
  border-radius: 98px 0 0 98px;
  background: #000;
  font-size: 55px;
  font-weight: 600;
  line-height: 198px;
  color: #fff;
  white-space: nowrap;
}
.distance span { display: inline-block; letter-spacing: .8px; transform: scaleX(1.145); transform-origin: 0 50%; }

.stats {
  display: grid;
  grid-template-columns: 439px 1fr;
  row-gap: 89px;
  padding: 113px 0 0 122px;
}
.stat { display: flex; gap: 21px; height: 114px; }
.stat svg { margin-top: 24px; }
.stat .flame { margin-top: 21px; }
.k, .v { transform-origin: 0 50%; }
.k { font-size: 34px; font-weight: 400; line-height: 50px; color: #848586; padding-left: 1px; transform: scaleX(1.056); }
.k.cal { transform: scaleX(1.092); }
.k.elev { transform: scaleX(1.116); }
.v { font-size: 55px; line-height: 64px; color: #000; transform: scaleX(1.088); }
.v.avg { transform: scaleX(1.099); }
.v.feet { transform: scaleX(1.052); }

h3 {
  margin: 117px 0 0 95px;
  font-size: 44px;
  line-height: 60px;
  color: #004dab;
  transform: scaleX(1.141);
  transform-origin: 0 50%;
}
.chart { display: flex; height: 141px; margin-top: 66px; padding-left: 132px; overflow: hidden; }
.swatch { width: 54px; height: 54px; margin: 139px 0 0 152px; flex: none; border-radius: 8px; background: #8db4dd; }

.nav {
  position: relative;
  flex: none;
  display: grid;
  grid-template-columns: repeat(5, 1fr);
  height: 158px;
  padding-top: 25px;
  border-radius: 14px 14px 0 0;
  background: #fff;
  box-shadow: 0 0 46px rgba(0, 0, 0, .32);
}
.item {
  display: flex;
  flex-direction: column;
  align-items: center;
  font-size: 34px;
  font-weight: 500;
  line-height: 50px;
  color: #848586;
}
.item span { transform: scaleX(1.093); }
.item .wide { transform: scaleX(1.117); }
.item .act { transform: scaleX(1.065); }
.active { color: #004dab; }
.mid { position: relative; }
.fab {
  position: absolute;
  top: -69px;
  left: 29px;
  display: flex;
  align-items: center;
  justify-content: center;
  width: 158px;
  height: 158px;
  padding-bottom: 10px;
  border: 6px solid #fff;
  border-radius: 50%;
  background: #004dab;
  box-shadow: 0 0 0 1px #aebccd;
}

.sys {
  position: relative;
  flex: none;
  display: flex;
  align-items: center;
  justify-content: center;
  gap: 258px;
  height: 135px;
  padding-bottom: 4px;
  background: #f5f5f8;
}
.sys svg { fill: none; stroke: #909090; stroke-width: 4.5; stroke-linecap: round; stroke-linejoin: round; }
.sys svg:last-child { margin-left: 8px; margin-right: -8px; }
```
